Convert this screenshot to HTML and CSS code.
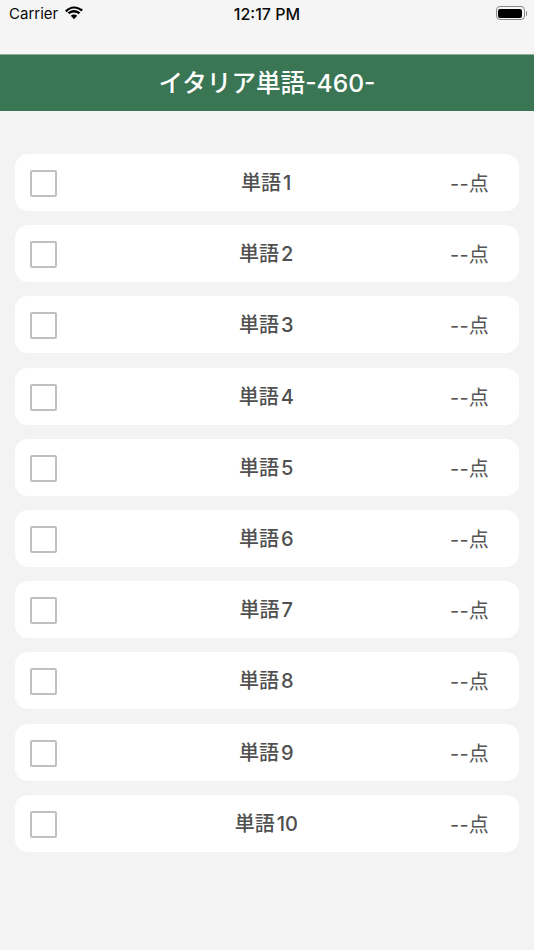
FILE: index.html
```html
<!DOCTYPE html>
<html lang="ja">
<head>
<meta charset="utf-8">
<title>イタリア単語-460-</title>
<link rel="stylesheet" href="styles.css">
</head>
<body>
<div class="status">
  <div class="status-left">
    <span class="carrier">Carrier</span>
    <svg class="wifi" viewBox="0 0 20 14" width="20" height="14"><path d="M10 2.6c2.800 0 5.300 1.100 7.200 2.900l1.800-1.900C16.500 2.100 13.400.4 10 .4S3.500 2.100 1 4.600l1.800 1.900C4.700 3.700 7.200 2.600 10 2.600z"/><path d="M10 6.400c1.800 0 3.400.7 4.600 1.900l1.700-1.800C14.600 4.800 12.400 3.900 10 3.900S5.400 4.800 3.700 6.500l1.700 1.800C6.600 7.100 8.200 6.400 10 6.400z"/><path d="M10 8.500c-1.300 0-2.400.5-3.200 1.300l3.200 3.500 3.200-3.500c-.8-.8-1.900-1.300-3.200-1.300z"/></svg>
  </div>
  <span class="time">12:17 PM</span>
  <div class="battery"><span class="battery-body"><span class="battery-fill"></span></span><span class="battery-cap"></span></div>
</div>
<header class="title-bar">イタリア単語-460-</header>
<main class="list">
  <div class="row"><span class="check"></span><span class="name">単語<span class="num">1</span></span><span class="score">--点</span></div>
  <div class="row"><span class="check"></span><span class="name">単語<span class="num">2</span></span><span class="score">--点</span></div>
  <div class="row"><span class="check"></span><span class="name">単語<span class="num">3</span></span><span class="score">--点</span></div>
  <div class="row"><span class="check"></span><span class="name">単語<span class="num">4</span></span><span class="score">--点</span></div>
  <div class="row"><span class="check"></span><span class="name">単語<span class="num">5</span></span><span class="score">--点</span></div>
  <div class="row"><span class="check"></span><span class="name">単語<span class="num">6</span></span><span class="score">--点</span></div>
  <div class="row"><span class="check"></span><span class="name">単語<span class="num">7</span></span><span class="score">--点</span></div>
  <div class="row"><span class="check"></span><span class="name">単語<span class="num">8</span></span><span class="score">--点</span></div>
  <div class="row"><span class="check"></span><span class="name">単語<span class="num">9</span></span><span class="score">--点</span></div>
  <div class="row"><span class="check"></span><span class="name">単語<span class="num">10</span></span><span class="score">--点</span></div>
</main>
</body>
</html>
```
FILE: styles.css
```css
* { box-sizing: border-box; }
html, body { margin: 0; height: 100%; }
body {
  width: 534px;
  height: 950px;
  overflow: hidden;
  background: #f3f3f3;
  font-family: Inter, "Noto Sans CJK JP", "Liberation Sans", sans-serif;
}
.status {
  height: 54px;
  position: relative;
  display: flex;
  justify-content: space-between;
  padding: 3px 7px 0 9px;
  color: #0a0a0a;
  font-size: 15px;
  line-height: 22px;
  background: #f5f5f5;
}
.status-left { display: flex; align-items: flex-start; gap: 6px; }
.wifi { margin-top: 3px; fill: #000; }
.time {
  position: absolute;
  left: 0;
  right: 0;
  text-align: center;
  font-size: 16px;
  font-weight: 500;
}
.battery { display: flex; align-items: center; height: 14px; margin-top: 3px; flex: none; }
.battery-body {
  display: block;
  width: 29px;
  height: 14px;
  padding: 1.500px;
  border: 1px solid #8a8a8a;
  border-radius: 4px;
  flex: none;
}
.battery-fill { display: block; height: 100%; background: #000; border-radius: 2px; }
.battery-cap { width: 1.500px; height: 5px; background: #8a8a8a; margin-left: 1px; border-radius: 0 1px 1px 0; flex: none; }
.title-bar {
  height: 57px;
  background: #3a7554;
  color: #fff;
  font-size: 24.600px;
  font-weight: 500;
  line-height: 57px;
  text-align: center;
  border-top: 1px solid #8fae9c;
}
.list {
  padding: 43px 15px 0 14.500px;
  display: flex;
  flex-direction: column;
  gap: 14.200px;
}
.row {
  height: 57px;
  background: #fff;
  border-radius: 13px;
  display: grid;
  grid-template-columns: 1fr 1fr 1fr;
  align-items: center;
  padding: 0 30px 0 15.500px;
  position: relative;
}
.check {
  width: 27px;
  height: 27px;
  margin-top: 2px;
  border: 2.500px solid #c0c0c0;
  border-radius: 2px;
}
.name {
  position: absolute;
  left: 0;
  right: 0;
  top: 17px;
  text-align: center;
  font-size: 20px;
  line-height: 24px;
  font-weight: 500;
  color: #505050;
  padding-right: 1px;
}
.num { margin-left: 2px; }
.score {
  grid-column: 3;
  text-align: right;
  font-size: 20px;
  color: #555;
  font-weight: 400;
  letter-spacing: 0.200px;
}
```
